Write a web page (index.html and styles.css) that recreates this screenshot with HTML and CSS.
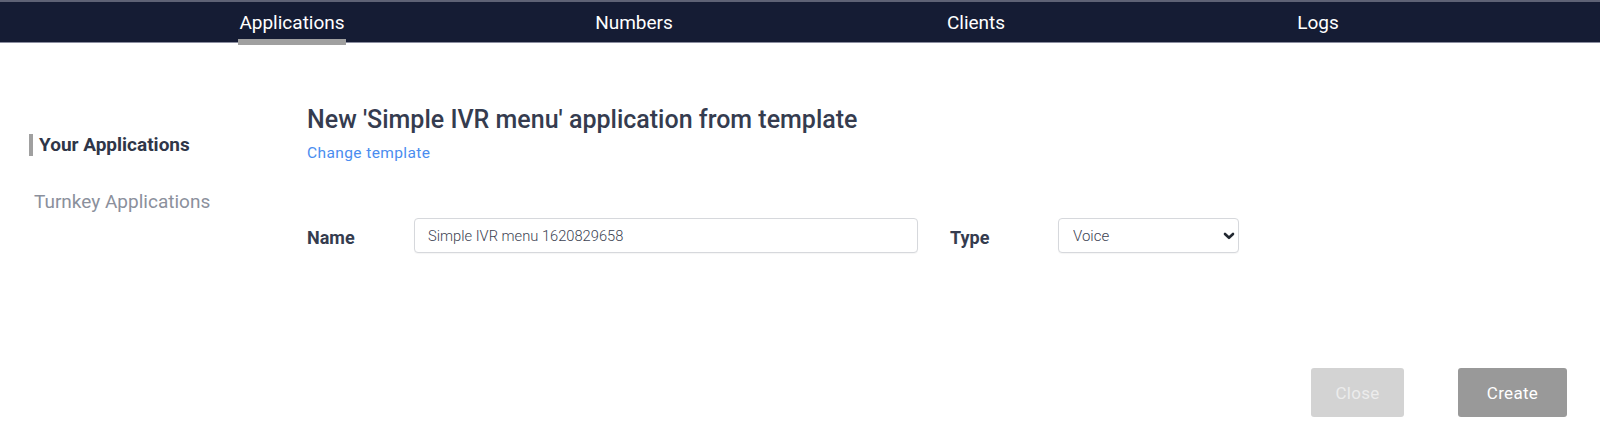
FILE: index.html
```html
<!DOCTYPE html>
<html lang="en">
<head>
<meta charset="utf-8">
<title>New application</title>
<link rel="stylesheet" href="styles.css">
</head>
<body>
<header class="topnav">
  <nav class="topnav-inner">
    <a class="topnav-item is-active" href="#"><span class="topnav-label">Applications</span></a>
    <a class="topnav-item" href="#"><span class="topnav-label">Numbers</span></a>
    <a class="topnav-item" href="#"><span class="topnav-label">Clients</span></a>
    <a class="topnav-item" href="#"><span class="topnav-label">Logs</span></a>
  </nav>
</header>
<div class="page">
  <aside class="sidebar">
    <a class="side-item is-active" href="#">Your Applications</a>
    <a class="side-item" href="#">Turnkey Applications</a>
  </aside>
  <main class="content">
    <h1 class="title">New 'Simple IVR menu' application from template</h1>
    <a class="change-link" href="#">Change template</a>
    <form class="form-row">
      <label class="field-label label-name" for="app-name">Name</label>
      <input class="text-input" id="app-name" type="text" value="Simple IVR menu 1620829658">
      <label class="field-label label-type" for="app-type">Type</label>
      <div class="select-wrap">
        <select class="select-input" id="app-type">
          <option>Voice</option>
          <option>Messaging</option>
        </select>
        <svg class="select-chevron" width="12" height="8" viewBox="0 0 12 8" aria-hidden="true"><path d="M2 2 L6 5.8 L10 2" fill="none" stroke="#222831" stroke-width="2.6" stroke-linecap="round" stroke-linejoin="round"/></svg>
      </div>
    </form>
    <div class="actions">
      <button class="btn btn-close" type="button">Close</button>
      <button class="btn btn-create" type="button">Create</button>
    </div>
  </main>
</div>
</body>
</html>
```
FILE: styles.css
```css
* { box-sizing: border-box; }

html, body {
  margin: 0;
  padding: 0;
  background: #ffffff;
  font-family: Roboto, "Liberation Sans", Arial, sans-serif;
}

a { text-decoration: none; }

.topnav {
  height: 43px;
  background: #151c34;
  border-top: 2px solid #5e6275;
  border-bottom: 1px solid #8b8ea0;
}

.topnav-inner {
  display: flex;
  height: 100%;
  padding-left: 121px;
}

.topnav-item {
  width: 342px;
  display: flex;
  justify-content: center;
  align-items: stretch;
  color: #ffffff;
  font-size: 19px;
}

.topnav-label {
  display: flex;
  align-items: center;
  height: 100%;
  position: relative;
}

.topnav-item.is-active .topnav-label::after {
  content: "";
  position: absolute;
  left: -1px;
  right: -1px;
  bottom: -3px;
  height: 6px;
  background: #a0a0a0;
}

.page {
  display: flex;
}

.sidebar {
  width: 307px;
  flex: none;
  padding: 91px 0 0 29px;
  display: flex;
  flex-direction: column;
  align-items: flex-start;
  gap: 35px;
}

.side-item {
  font-size: 19px;
  line-height: 22px;
  color: #8b909c;
  padding-left: 5px;
}

.side-item.is-active {
  color: #2f3648;
  font-weight: 700;
  border-left: 4px solid #a0a0a0;
  padding-left: 6px;
}

.content {
  flex: 1;
  padding: 62px 33px 0 0;
  display: flex;
  flex-direction: column;
  align-items: flex-start;
}

.title {
  margin: 0;
  font-size: 25px;
  line-height: 29px;
  font-weight: 500;
  color: #353c4f;
}

.change-link {
  margin-top: 9px;
  font-size: 15.5px;
  line-height: 20px;
  letter-spacing: 0.4px;
  color: #4a8def;
}

.form-row {
  margin: 55px 0 0;
  display: flex;
  align-items: center;
}

.field-label {
  font-size: 18px;
  font-weight: 700;
  color: #353c4f;
  padding-top: 4px;
}

.label-name { width: 107px; }
.label-type { width: 108px; margin-left: 32px; }

.text-input {
  width: 504px;
  height: 35px;
  border: 1px solid #d6d8dc;
  border-radius: 4px;
  padding: 0 13px;
  font-family: Roboto, "Liberation Sans", Arial, sans-serif;
  font-size: 14.7px;
  font-weight: 300;
  color: #3d4353;
  background: #fff;
  box-shadow: 0 1px 1px rgba(0,0,0,0.04);
}

.select-wrap {
  position: relative;
}

.select-input {
  appearance: none;
  -webkit-appearance: none;
  width: 181px;
  height: 35px;
  border: 1px solid #d6d8dc;
  border-radius: 4px;
  padding: 0 30px 0 14px;
  font-family: Roboto, "Liberation Sans", Arial, sans-serif;
  font-size: 15px;
  font-weight: 300;
  color: #3d4353;
  background: #fff;
  box-shadow: 0 1px 1px rgba(0,0,0,0.04);
}

.select-chevron {
  position: absolute;
  right: 4px;
  top: 14px;
  pointer-events: none;
}

.actions {
  align-self: stretch;
  margin-top: 115px;
  display: flex;
  justify-content: flex-end;
  gap: 54px;
}

.btn {
  height: 49px;
  border: none;
  border-radius: 3px;
  font-family: Roboto, "Liberation Sans", Arial, sans-serif;
  font-size: 17px;
  letter-spacing: 0.3px;
  color: #ffffff;
}

.btn-close {
  width: 93px;
  background: #d3d3d3;
  color: #ececec;
}

.btn-create {
  width: 109px;
  background: #999999;
}
```
